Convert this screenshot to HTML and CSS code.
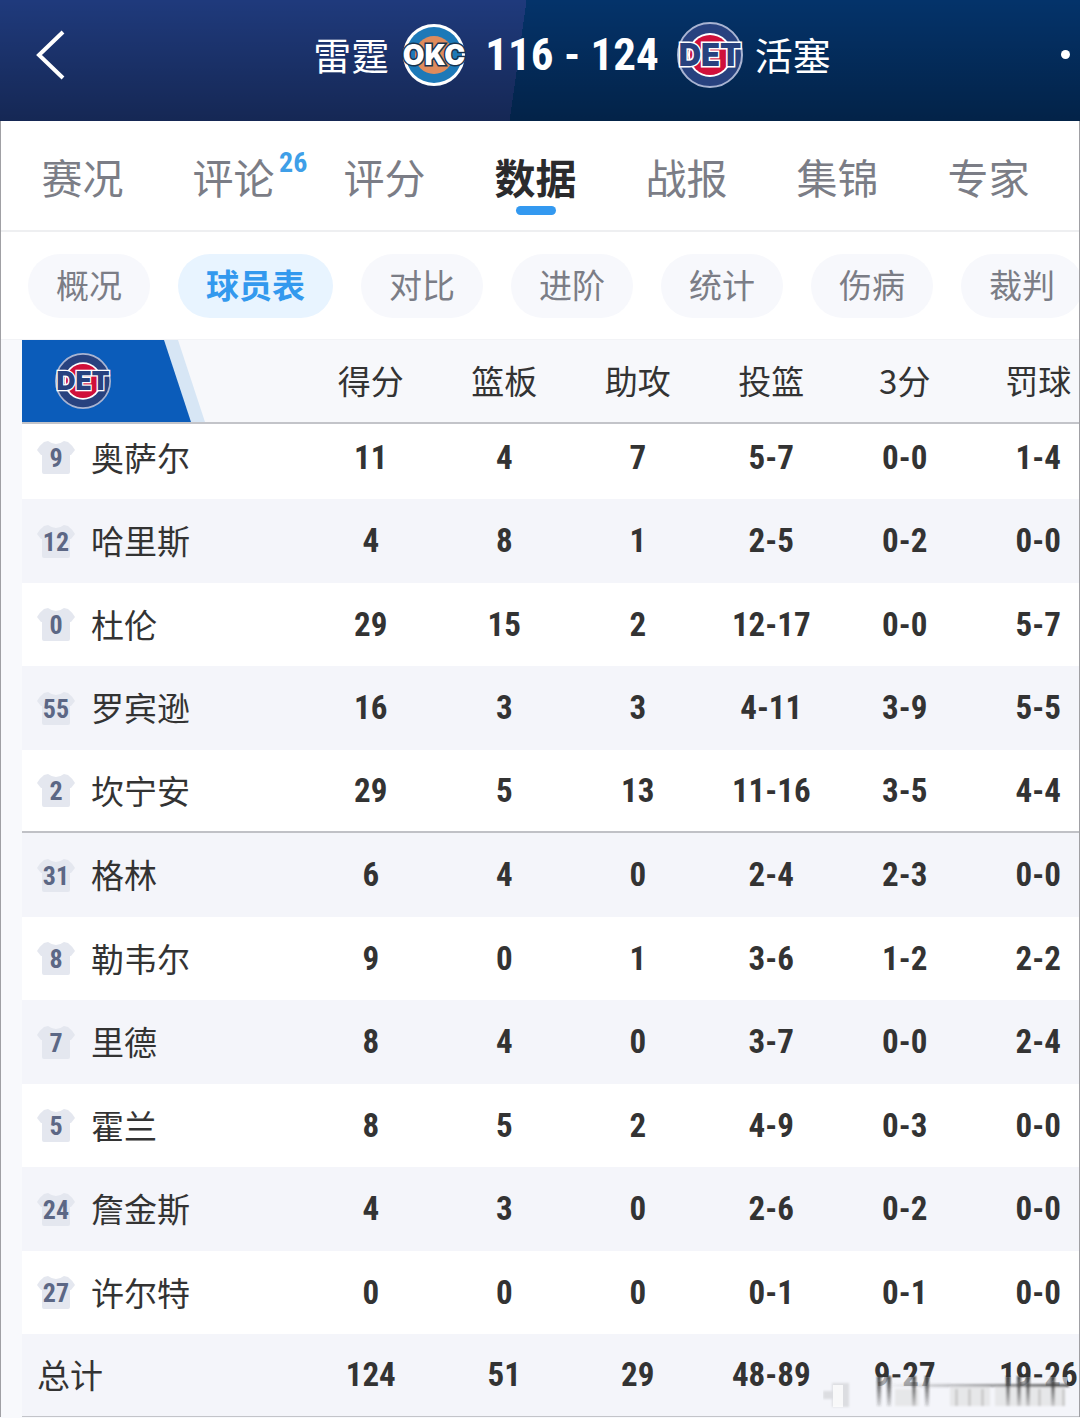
FILE: index.html
```html
<!DOCTYPE html>
<html lang="zh-CN">
<head>
  <meta charset="UTF-8">
  <meta name="viewport" content="width=device-width, initial-scale=1">
  <title>雷霆 116 - 124 活塞</title>
  <link rel="stylesheet" href="styles.css">
</head>
<body>

  <svg class="defs" aria-hidden="true">
    <symbol id="okc" viewBox="0 0 66 66">
      <circle cx="33" cy="33" r="31" fill="#fff"/>
      <circle cx="33" cy="33" r="28" fill="#1d79b8"/>
      <circle cx="33" cy="33" r="19" fill="#df8b5c"/>
      <text class="logo-text" x="33" y="43" font-size="28" text-anchor="middle" fill="#fff" stroke="#17334f" stroke-width="3">OKC</text>
    </symbol>
    <symbol id="det" viewBox="0 0 66 66">
      <circle cx="33" cy="33" r="32" fill="#28427f" stroke="#a9b4d2" stroke-width="2"/>
      <circle cx="33" cy="33" r="22" fill="#fff"/>
      <circle cx="33" cy="33" r="20" fill="#d0103a"/>
      <text class="logo-text" x="33" y="44" font-size="31" text-anchor="middle" fill="#28427f" stroke="#fff" stroke-width="3">DET</text>
    </symbol>
    <symbol id="shirt" viewBox="0 0 38 35">
      <path d="M11 1 Q19 7 27 1 L31 2 Q35 5 38 10 L34 15 L33 15 V32 Q33 34 31 34 H7 Q5 34 5 32 V15 L4 15 L0 10 Q3 5 7 2 Z" fill="#e4e7ef"/>
    </symbol>
  </svg>

  <header class="top">
    <button class="back" aria-label="返回">
      <svg width="30" height="52" viewBox="0 0 30 52"><path d="M27 3 L3 26 L27 49" fill="none" stroke="#fff" stroke-width="4"/></svg>
    </button>
    <h1 class="match">
      <span class="name">雷霆</span>
      <svg class="logo"><use href="#okc"/></svg>
      <span class="score">116 - 124</span>
      <svg class="logo"><use href="#det"/></svg>
      <span class="name">活塞</span>
    </h1>
    <button class="more" aria-label="更多"><span></span></button>
  </header>

  <main>
    <nav class="tabs">
      <a href="#">赛况</a>
      <a href="#">评论<sup>26</sup></a>
      <a href="#">评分</a>
      <a href="#" class="active">数据</a>
      <a href="#">战报</a>
      <a href="#">集锦</a>
      <a href="#">专家</a>
    </nav>

    <div class="pills">
      <button>概况</button>
      <button class="active">球员表</button>
      <button>对比</button>
      <button>进阶</button>
      <button>统计</button>
      <button>伤病</button>
      <button>裁判</button>
    </div>

    <div class="tabla">
      <table>
        <thead>
          <tr>
            <th class="team"><div class="flag"><svg><use href="#det"/></svg></div></th>
            <th>得分</th><th>篮板</th><th>助攻</th><th>投篮</th><th>3分</th><th>罚球</th>
          </tr>
        </thead>
        <tbody id="players"></tbody>
        <tfoot>
          <tr><th>总计</th><td>124</td><td>51</td><td>29</td><td>48-89</td><td>9-27</td><td>19-26</td></tr>
        </tfoot>
      </table>
      <svg class="smear" viewBox="0 0 256 34" aria-hidden="true">
        <defs>
          <linearGradient id="fade" x1="0" y1="0" x2="0" y2="1">
            <stop offset="0" stop-color="#333" stop-opacity=".9"/>
            <stop offset="1" stop-color="#333" stop-opacity=".15"/>
          </linearGradient>
          <linearGradient id="line" x1="0" y1="0" x2="1" y2="0">
            <stop offset="0" stop-color="#555" stop-opacity="0"/>
            <stop offset="1" stop-color="#444" stop-opacity=".9"/>
          </linearGradient>
          <filter id="soft"><feGaussianBlur stdDeviation="1"/></filter>
        </defs>
        <path d="M50 2 H244 V34 H50 Z" fill="#f4f5fa" opacity=".6"/>
        <g filter="url(#soft)">
          <path d="M127 12 h40 v19 h-40 z M172 12 h70 v19 h-70 z M72 14 h24 v17 h-24 z" fill="#ddd" opacity=".6"/>
          <path d="M0 16 H9 V8 H26 V32 H9 V24 H0 Z" fill="#dcdde1"/>
          <path d="M54 1 h4 v30 h-4 z M64 1 h4 v30 h-4 z M89 1 h4 v30 h-4 z M102 1 h4 v30 h-4 z M183 1 h4 v30 h-4 z M194 1 h4 v30 h-4 z M203 1 h4 v30 h-4 z M228 1 h4 v30 h-4 z" fill="url(#fade)"/>
          <path d="M132 14 h3 v17 h-3 z M145 14 h3 v17 h-3 z M158 14 h3 v17 h-3 z M215 14 h3 v17 h-3 z M239 14 h3 v17 h-3 z" fill="#bbb" opacity=".6"/>
          <path d="M60 9 H246 V12 H60 Z" fill="url(#line)"/>
        </g>
        <path d="M10 10 h10 v22 h-10 z" fill="#fff" opacity=".8"/>
      </svg>
    </div>
  </main>

  <script>
    const players = [
      [9, "奥萨尔", 11, 4, 7, "5-7", "0-0", "1-4"],
      [12, "哈里斯", 4, 8, 1, "2-5", "0-2", "0-0"],
      [0, "杜伦", 29, 15, 2, "12-17", "0-0", "5-7"],
      [55, "罗宾逊", 16, 3, 3, "4-11", "3-9", "5-5"],
      [2, "坎宁安", 29, 5, 13, "11-16", "3-5", "4-4"],
      [31, "格林", 6, 4, 0, "2-4", "2-3", "0-0"],
      [8, "勒韦尔", 9, 0, 1, "3-6", "1-2", "2-2"],
      [7, "里德", 8, 4, 0, "3-7", "0-0", "2-4"],
      [5, "霍兰", 8, 5, 2, "4-9", "0-3", "0-0"],
      [24, "詹金斯", 4, 3, 0, "2-6", "0-2", "0-0"],
      [27, "许尔特", 0, 0, 0, "0-1", "0-1", "0-0"]
    ];

    document.getElementById("players").innerHTML = players.map(([num, name, ...stats]) => `
      <tr>
        <th scope="row"><div class="player">
          <svg class="shirt"><use href="#shirt"/><text x="19" y="27" text-anchor="middle">${num}</text></svg>
          <span class="name">${name}</span>
        </div></th>
        ${stats.map(s => `<td>${s}</td>`).join("")}
      </tr>`).join("");
  </script>

</body>
</html>
```
FILE: styles.css
```css
:root {
  --num: "Roboto Condensed", "Liberation Sans", sans-serif;
}
* {
  box-sizing: border-box;
}
body {
  margin: 0;
  font-family: "Noto Sans CJK SC", sans-serif;
  background-color: #f8f9fc;
  color: #333;
  overflow-x: hidden;
}
button {
  font-family: inherit;
  border: none;
  padding: 0;
  background: none;
  cursor: pointer;
}
a {
  text-decoration: none;
}
.defs {
  display: none;
}
.name {
  padding-bottom: 2px;
}

/* cabecera */
.top {
  display: flex;
  align-items: center;
  height: 121px;
  padding-bottom: 12px;
  color: #fff;
  background:
    linear-gradient(to bottom, rgba(0,0,0,0), rgba(0,0,0,0.32)),
    linear-gradient(98deg, #1f3a7c 48%, #04336a 48%);
}
.back {
  width: 96px;
  height: 64px;
  padding-left: 36px;
  text-align: left;
}
.back svg {
  display: block;
}
.match {
  flex: 1;
  display: flex;
  align-items: center;
  justify-content: center;
  margin: 0;
  font-size: 38px;
  font-weight: 400;
  white-space: nowrap;
}
.logo {
  width: 66px;
  height: 66px;
  margin: 0 12px;
}
.score {
  margin: 0 6px;
  font-family: var(--num);
  font-size: 45px;
  font-weight: 700;
}
.logo-text {
  font-family: "Inter", sans-serif;
  font-weight: 900;
  paint-order: stroke;
}
.more {
  width: 32px;
  height: 64px;
  padding-left: 13px;
}
.more span {
  display: block;
  width: 9px;
  height: 9px;
  border-radius: 50%;
  background-color: #fff;
}

main {
  border: solid #a0a0a4;
  border-width: 0 1px;
}

/* pestañas */
.tabs {
  display: flex;
  height: 111px;
  padding: 0 15px 0 6px;
  background-color: #fff;
  border-bottom: 2px solid #eeeff1;
}
.tabs a {
  flex: 1;
  position: relative;
  text-align: center;
  font-size: 41px;
  line-height: 110px;
  color: #7b7d86;
}
.tabs sup {
  position: absolute;
  top: 26px;
  left: 121px;
  font-family: var(--num);
  font-size: 28px;
  font-weight: 700;
  line-height: 32px;
  color: #3f9fe8;
}
.tabs .active {
  color: #2b2b2d;
  font-weight: 700;
}
.tabs .active::after {
  content: "";
  position: absolute;
  left: 50%;
  bottom: 15px;
  width: 40px;
  height: 9px;
  margin-left: -20px;
  border-radius: 5px;
  background-color: #3399f0;
}

.pills {
  display: flex;
  gap: 28px;
  padding: 22px 0 21px 27px;
  background-color: #fff;
  border-bottom: 1px solid #f2f3f6;
  overflow: hidden;
}
.pills button {
  flex: none;
  height: 64px;
  padding: 0 28px 4px;
  border-radius: 32px;
  font-size: 33px;
  line-height: 60px;
  color: #7b7d86;
  background-color: #f7f8fc;
}
.pills .active {
  color: #3399ee;
  font-weight: 700;
  background-color: #e8f4ff;
}

/* tabla de jugadores */
.tabla {
  position: relative;
  margin-left: 21px;
  overflow: hidden;
}
table {
  width: calc(100% + 26px);
  table-layout: fixed;
  border-collapse: separate;
  border-spacing: 0;
}
th, td {
  padding: 0;
  font-size: 33px;
  line-height: 48px;
  text-align: center;
  font-weight: 400;
}
td {
  font-family: var(--num);
  font-weight: 700;
}
thead th {
  height: 84px;
  padding-bottom: 2px;
  background-color: #f7f8fb;
  border-bottom: 2px solid #c3c4c9;
}
thead .team {
  width: 282px;
  padding: 0;
}
.flag {
  position: relative;
  width: 183px;
  height: 82px;
  background-color: #d7e6f5;
  clip-path: polygon(0 0, 156px 0, 100% 100%, 0 100%);
}
.flag::before {
  content: "";
  position: absolute;
  inset: 0;
  background-color: #0b5cba;
  clip-path: polygon(0 0, 142px 0, 169px 100%, 0 100%);
}
.flag svg {
  position: absolute;
  left: 33px;
  top: 13px;
  width: 56px;
  height: 56px;
}
tbody tr, tfoot tr {
  height: 83px;
  background-color: #fff;
}
tbody tr:nth-child(even) {
  height: 84px;
  background-color: #f4f5fa;
}
tfoot tr {
  background-color: #f4f5fa;
}
tbody tr:first-child {
  height: 75px;
}
tbody tr:first-child > * {
  padding-bottom: 8px;
}
/* separa titulares y suplentes */
tbody tr:nth-child(5) > * {
  border-bottom: 2px solid #c0c1c6;
}
tfoot tr > * {
  border-bottom: 1px solid #c3c4c9;
}
tfoot th {
  text-align: left;
  padding: 0 0 2px 15px;
}
.player {
  display: flex;
  align-items: center;
  gap: 16px;
  padding-left: 15px;
}
.shirt {
  width: 38px;
  height: 35px;
}
.shirt text {
  font-family: var(--num);
  font-size: 26px;
  font-weight: 700;
  fill: #5c6785;
}
.smear {
  position: absolute;
  right: 0;
  bottom: 8px;
  width: 256px;
  height: 34px;
}
```
